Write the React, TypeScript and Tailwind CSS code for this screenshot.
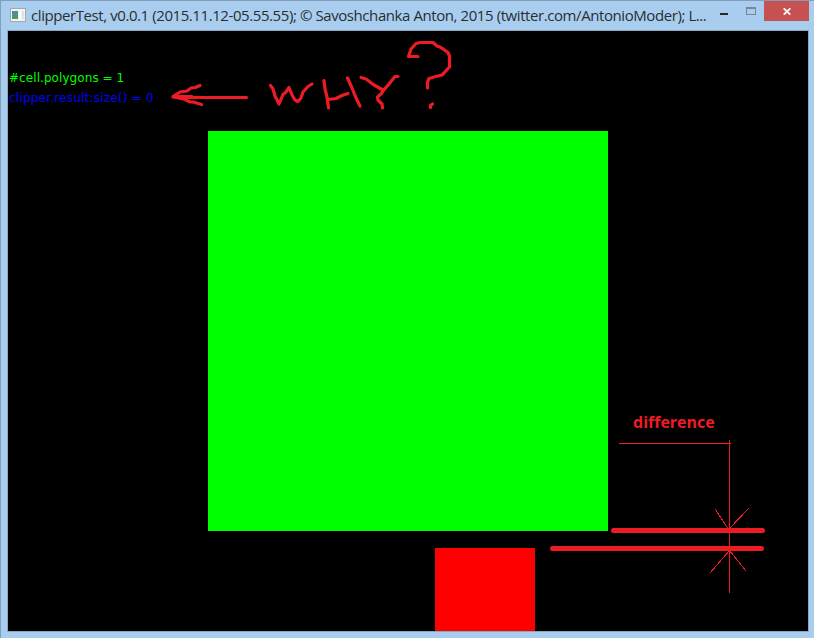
function AppIcon() {
  return (
    <svg className="shrink-0" width="16" height="14" viewBox="0 0 16 14" shapeRendering="crispEdges">
      <rect width="16" height="14" fill="#a4a9ad" />
      <rect x="1" y="1" width="14" height="12" fill="#f1f3f3" />
      <rect x="2" y="3" width="6" height="8" fill="#4c8fa0" />
      <rect x="2" y="7" width="6" height="4" fill="#459a70" />
      <rect x="2" y="3" width="3" height="4" fill="#5a83ac" />
      <rect x="9" y="3" width="2" height="8" fill="#ffffff" />
      <rect x="12" y="3" width="2" height="8" fill="#dde3e1" />
    </svg>
  );
}

function TitleBar() {
  return (
    <header className="flex h-[29px] items-start">
      <div className="flex h-full w-[708px] items-center gap-[5px] pb-px pl-[9px]">
        <AppIcon />
        <h1 className="w-[676px] shrink-0 whitespace-nowrap font-['Open_Sans','Noto_Sans',sans-serif] text-[15px] leading-5 tracking-[-0.42px] text-[#2a2d32]">
          clipperTest, v0.0.1 (2015.11.12-05.55.55); © Savoshchanka Anton, 2015 (twitter.com/AntonioModer); L...
        </h1>
      </div>
      <div className="ml-auto mr-[5px] flex h-5 shrink-0">
        <button aria-label="Minimize" className="flex w-[27px] justify-center pt-3">
          <span className="h-0.5 w-2 bg-[#25292e]" />
        </button>
        <button aria-label="Maximize" className="flex w-[27px] justify-center pt-1.5">
          <span className="h-2 w-2.5 border border-t-2 border-[#75879a]" />
        </button>
        <button aria-label="Close" className="flex w-[45px] items-center justify-center bg-[#c75050]">
          <svg width="8" height="7" viewBox="0 0 8 7">
            <path d="M.7 .3 7.3 6.7M7.3 .3 .7 6.7" stroke="#fff" strokeWidth="1.7" />
          </svg>
        </button>
      </div>
    </header>
  );
}

function Annotations() {
  return (
    <svg className="absolute inset-0" width="800" height="600" viewBox="8 31 800 600" fill="none" stroke="#ed1c24">
      <g strokeWidth="3.2" strokeLinecap="round" strokeLinejoin="round">
        <path d="M246.5 97.5H190L173 96.5L180 92L187 91L191 88L195 87.5L200 85.5M173 97L184 99L190 102H193L201.5 104.5M176 96.5L192 96.5" />
        <path d="M270.5 85.5L273 89L275 96L279 104L283 94.5L286 92L289 87.5L292 95L295 100L298 101.5L301 98L303 92L308 86.5L312 84" />
        <path d="M324 80.5L325 89L327 97L328.5 108M328 99.5L336 98.5L342 95.5L348 93.5M347.5 78L352 88L356 98L360 106" />
        <path d="M361 77.5L366 79L374 85L383 90M398 76.5H395L389 84L383 91L381 94L377.5 97L378 100L382 104L382.5 108" />
        <path d="M418 56.5H408.5L411 49L416 43.5L420 42.5H433L437 46L441 47.5L448 52.5L449.5 56V67L444 73L442 75L434 77L429 78.5L427.5 82V88M432.5 104L430.5 105.5V107.5" />
      </g>
      <g strokeWidth="5" strokeLinecap="round">
        <path d="M613.5 530.5H762.5M552.5 548.5H761.5" />
      </g>
      <g shapeRendering="crispEdges">
        <path d="M619 443.5H731M729.5 440V593M715.5 509.5L728.5 529.5M748.5 508.5L729.5 528.5M729.5 550.5L710 573M729.5 550.5L746 571" />
      </g>
    </svg>
  );
}

export default function App() {
  return (
    <div className="h-[638px] w-[814px] overflow-hidden border-l border-t border-[#829eb9] bg-[#a9cdee]">
      <TitleBar />
      <main className="ml-1.5 h-[602px] w-[802px] border border-[#89a7c1]">
        <div className="relative h-[600px] w-[800px] overflow-hidden bg-black">
          <div className="h-[100px] pt-[37px] font-['DejaVu_Sans',sans-serif] text-[12px] leading-5">
            <p className="w-fit whitespace-nowrap pl-px tracking-[0.07px] text-[#00ff00]">#cell.polygons = 1</p>
            <p className="w-fit whitespace-nowrap pl-px tracking-[0.21px] text-[#0000ff]">clipper.result:size() = 0</p>
          </div>
          <div className="ml-[200px] size-[400px] bg-[#00ff00]" />
          <div className="ml-[427px] mt-[17px] h-[83px] w-[100px] bg-[#ff0000]" />
          <Annotations />
          <span className="absolute left-[625px] top-[381px] font-['Open_Sans','Noto_Sans',sans-serif] text-[16px] font-bold leading-5 text-[#ed1c24]">
            difference
          </span>
        </div>
      </main>
    </div>
  );
}
